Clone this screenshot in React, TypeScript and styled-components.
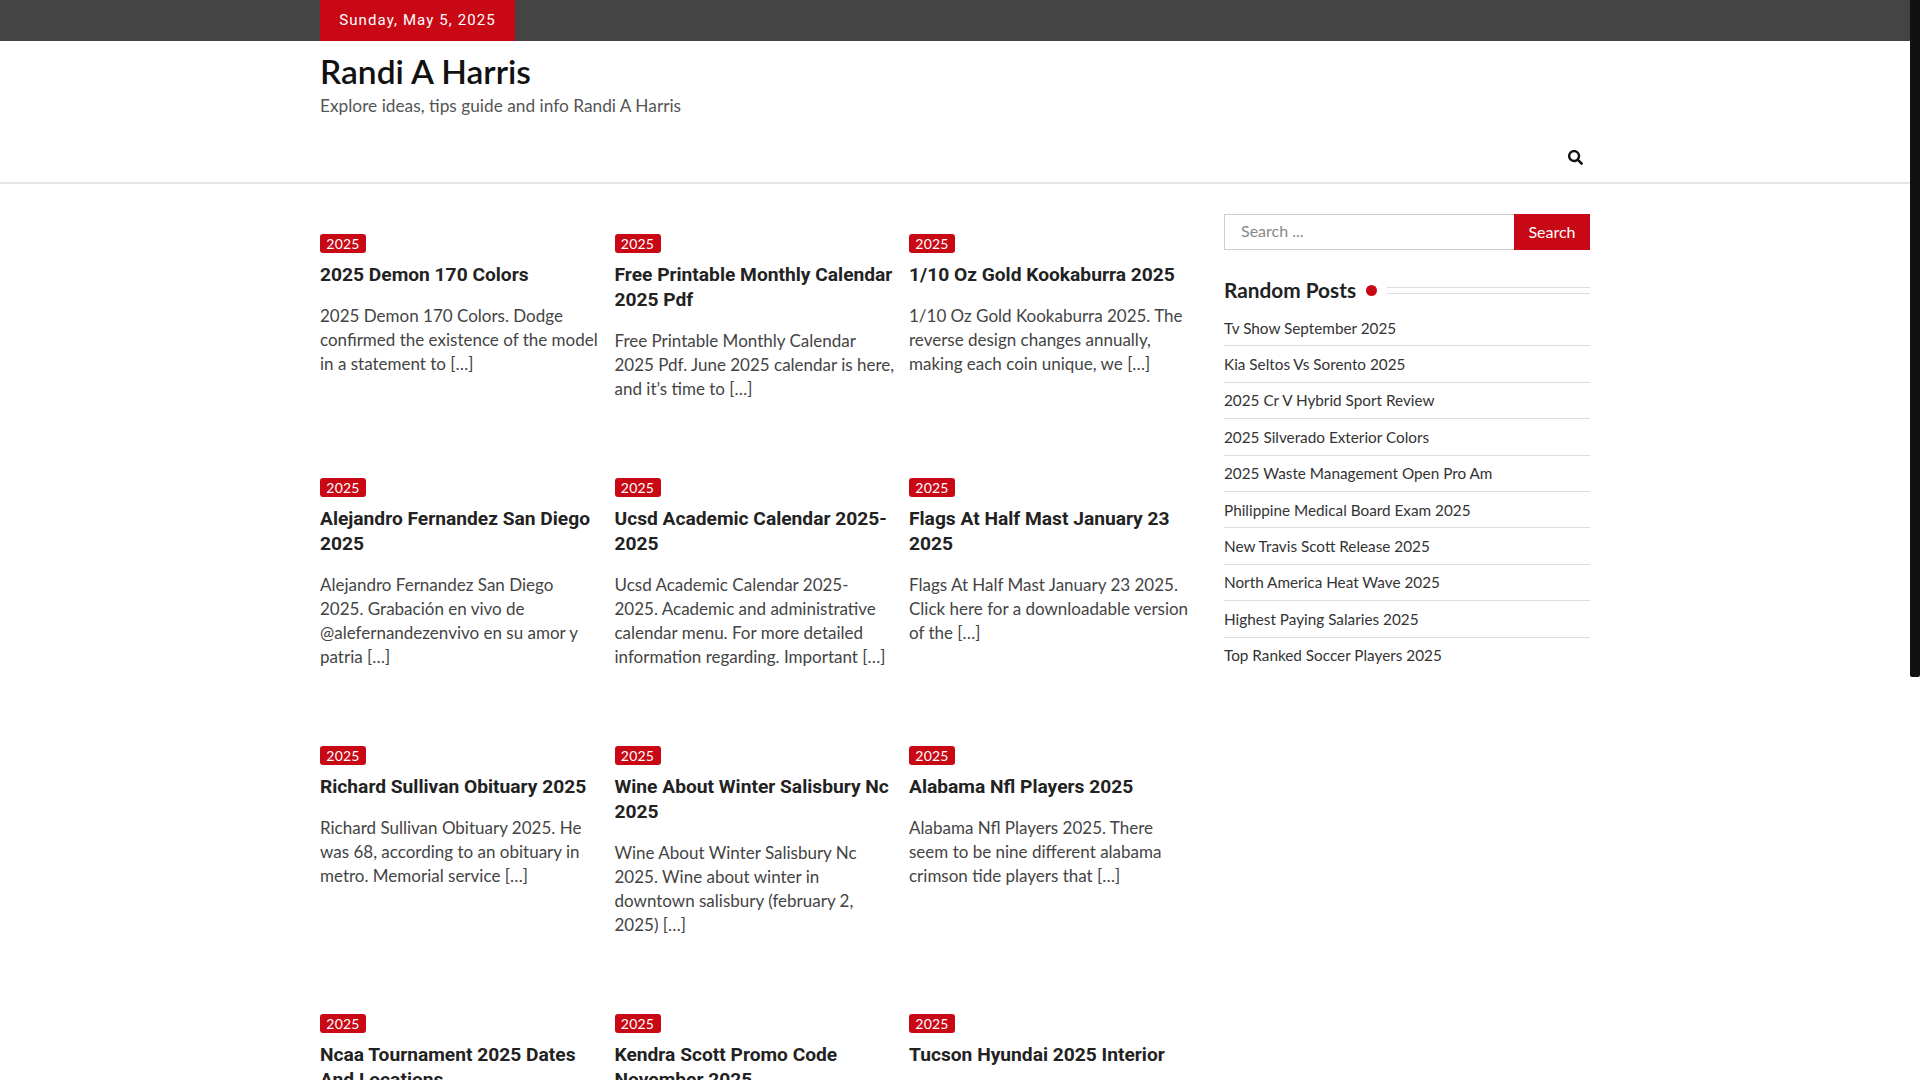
import React from "react";
import styled, { createGlobalStyle } from "styled-components";
import { FaSearch } from "react-icons/fa";

const GlobalStyle = createGlobalStyle`
  html, body {
    margin: 0;
    padding: 0;
    background: #fff;
  }
  * {
    box-sizing: border-box;
  }
`;

const Screen = styled.div`
  display: flex;
  height: 100vh;
  overflow: hidden;
  font-family: "Lato", "Noto Sans", sans-serif;
  color: #404040;
`;

const Page = styled.div`
  flex: 1;
  min-width: 0;
`;

const ScrollTrack = styled.div`
  width: 10px;
  flex: none;
  background: #fff;
`;

const ScrollThumb = styled.div`
  height: 677px;
  background: #111;
  border-radius: 0 0 2px 2px;
`;

const Container = styled.div`
  width: 1270px;
  margin: 0 auto;
`;

const TopBar = styled.div`
  height: 41px;
  background: #444;
`;

const DateBox = styled.div`
  width: 195px;
  height: 41px;
  background: #c80815;
  color: #fff;
  font-family: "Roboto", sans-serif;
  font-weight: 400;
  font-size: 15px;
  letter-spacing: 1.1px;
  line-height: 40px;
  text-align: center;
`;

const Header = styled.header`
  height: 143px;
  border-bottom: 2px solid #e5e5e5;
`;

const Branding = styled(Container)`
  padding-top: 10px;
`;

const SiteTitle = styled.h1`
  margin: 0;
  font-size: 33.5px;
  font-weight: 600;
  line-height: 40px;
  color: #111;
`;

const Tagline = styled.p`
  margin: 2px 0 0;
  font-size: 17.3px;
  line-height: 26px;
  color: #555;
`;

const NavRow = styled.div`
  display: flex;
  justify-content: flex-end;
  padding: 31px 7px 0 0;
  color: #111;
  font-size: 15px;
  line-height: 15px;
`;

const Content = styled(Container)`
  display: flex;
  justify-content: space-between;
  padding-top: 30px;
`;

const PostGrid = styled.main`
  display: grid;
  grid-template-columns: repeat(3, 280px);
  column-gap: 14.5px;
  row-gap: 77px;
  align-items: start;
  padding-top: 20px;
`;

const Post = styled.article``;

const Tag = styled.span`
  display: block;
  width: 46px;
  height: 19px;
  background: #c80815;
  border-radius: 3px;
  color: #fff;
  font-size: 14px;
  line-height: 19px;
  letter-spacing: 0.2px;
  text-align: center;
`;

const PostTitle = styled.h2`
  margin: 9px 0 17px;
  font-family: "Roboto", sans-serif;
  font-weight: 700;
  font-size: 19.2px;
  line-height: 25px;
  color: #222;
`;

const Excerpt = styled.p`
  margin: 0;
  font-size: 17px;
  line-height: 24px;
  color: #444;
  white-space: pre-line;
`;

const Sidebar = styled.aside`
  width: 366px;
  flex: none;
`;

const SearchForm = styled.form`
  display: flex;
  height: 36px;
`;

const SearchInput = styled.input`
  flex: 1;
  min-width: 0;
  height: 36px;
  padding: 0 16px 4px;
  border: 1px solid #ccc;
  border-right: 0;
  outline: none;
  font: 16px "Lato", sans-serif;
  color: #444;
  &::placeholder {
    color: #888;
    opacity: 1;
  }
`;

const SearchButton = styled.button`
  width: 76px;
  border: none;
  background: #c80815;
  color: #fff;
  font: 16px "Lato", sans-serif;
  padding: 0 0 2px;
`;

const WidgetHeading = styled.div`
  display: flex;
  align-items: center;
  margin-top: 27px;
  height: 26px;
`;

const WidgetTitle = styled.h3`
  margin: 0;
  font-size: 20.8px;
  font-weight: 700;
  line-height: 26px;
  color: #222;
`;

const Dot = styled.span`
  width: 11px;
  height: 11px;
  margin: 0 10px;
  border-radius: 50%;
  background: #c80815;
`;

const DoubleRule = styled.span`
  flex: 1;
  height: 7px;
  border-top: 1.5px solid #ddd;
  border-bottom: 1.5px solid #ddd;
`;

const LinkList = styled.ul`
  list-style: none;
  margin: 7px 0 0;
  padding: 0;
`;

const LinkItem = styled.li`
  padding: 6.5px 0;
  font-size: 15.3px;
  line-height: 22.4px;
  color: #333;
  border-bottom: 1px solid #ddd;
  &:last-child {
    border-bottom: 0;
  }
`;

type PostData = { title: string; excerpt?: string };

const posts: PostData[] = [
  {
    title: "2025 Demon 170 Colors",
    excerpt:
      "2025 Demon 170 Colors. Dodge confirmed the existence of the model in a statement to […]",
  },
  {
    title: "Free Printable Monthly Calendar 2025 Pdf",
    excerpt:
      "Free Printable Monthly Calendar 2025 Pdf. June 2025 calendar is here, and it’s time to […]",
  },
  {
    title: "1/10 Oz Gold Kookaburra 2025",
    excerpt:
      "1/10 Oz Gold Kookaburra 2025. The reverse design changes annually, making each coin unique, we […]",
  },
  {
    title: "Alejandro Fernandez San Diego 2025",
    excerpt:
      "Alejandro Fernandez San Diego 2025. Grabación en vivo de @alefernandezenvivo en su amor y patria […]",
  },
  {
    title: "Ucsd Academic Calendar 2025-2025",
    excerpt:
      "Ucsd Academic Calendar 2025-\n2025. Academic and administrative calendar menu. For more detailed information regarding. Important […]",
  },
  {
    title: "Flags At Half Mast January 23 2025",
    excerpt:
      "Flags At Half Mast January 23 2025. Click here for a downloadable version of the […]",
  },
  {
    title: "Richard Sullivan Obituary 2025",
    excerpt:
      "Richard Sullivan Obituary 2025. He was 68, according to an obituary in metro. Memorial service […]",
  },
  {
    title: "Wine About Winter Salisbury Nc 2025",
    excerpt:
      "Wine About Winter Salisbury Nc 2025. Wine about winter in downtown salisbury (february 2, 2025) […]",
  },
  {
    title: "Alabama Nfl Players 2025",
    excerpt:
      "Alabama Nfl Players 2025. There seem to be nine different alabama crimson tide players that […]",
  },
  { title: "Ncaa Tournament 2025 Dates And Locations" },
  { title: "Kendra Scott Promo Code November 2025" },
  { title: "Tucson Hyundai 2025 Interior" },
];

const randomPosts = [
  "Tv Show September 2025",
  "Kia Seltos Vs Sorento 2025",
  "2025 Cr V Hybrid Sport Review",
  "2025 Silverado Exterior Colors",
  "2025 Waste Management Open Pro Am",
  "Philippine Medical Board Exam 2025",
  "New Travis Scott Release 2025",
  "North America Heat Wave 2025",
  "Highest Paying Salaries 2025",
  "Top Ranked Soccer Players 2025",
];

export default function App() {
  return (
    <Screen>
      <GlobalStyle />
      <Page>
        <TopBar>
          <Container>
            <DateBox>Sunday, May 5, 2025</DateBox>
          </Container>
        </TopBar>
        <Header>
          <Branding>
            <SiteTitle>Randi A Harris</SiteTitle>
            <Tagline>Explore ideas, tips guide and info Randi A Harris</Tagline>
            <NavRow>
              <FaSearch />
            </NavRow>
          </Branding>
        </Header>
        <Content>
          <PostGrid>
            {posts.map((post) => (
              <Post key={post.title}>
                <Tag>2025</Tag>
                <PostTitle>{post.title}</PostTitle>
                {post.excerpt && <Excerpt>{post.excerpt}</Excerpt>}
              </Post>
            ))}
          </PostGrid>
          <Sidebar>
            <SearchForm onSubmit={(e) => e.preventDefault()}>
              <SearchInput type="search" placeholder="Search ..." />
              <SearchButton type="submit">Search</SearchButton>
            </SearchForm>
            <WidgetHeading>
              <WidgetTitle>Random Posts</WidgetTitle>
              <Dot />
              <DoubleRule />
            </WidgetHeading>
            <LinkList>
              {randomPosts.map((name) => (
                <LinkItem key={name}>{name}</LinkItem>
              ))}
            </LinkList>
          </Sidebar>
        </Content>
      </Page>
      <ScrollTrack>
        <ScrollThumb />
      </ScrollTrack>
    </Screen>
  );
}
